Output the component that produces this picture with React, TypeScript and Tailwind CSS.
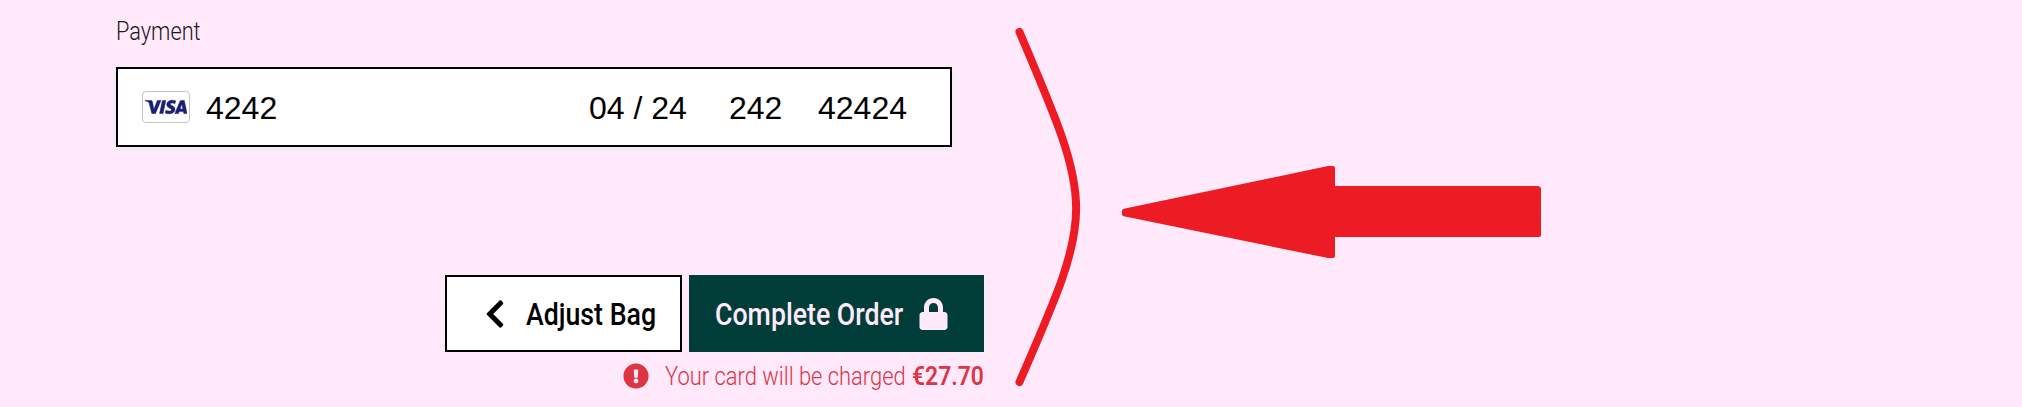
import { FaChevronLeft, FaExclamationCircle, FaLock } from "react-icons/fa";
import { SiVisa } from "react-icons/si";

function CardField() {
  return (
    <div className="mt-[20px] flex h-[80px] w-[836px] items-center border-2 border-black bg-white pl-[24px] font-['Liberation_Sans',Arial,sans-serif] text-[32px] leading-[36px] text-black shadow-[0_2px_6px_0_#e6ebf1]">
      <div className="flex h-[32px] w-[48px] items-center justify-center rounded-[4px] border border-[#c4c4c8] bg-white text-[#1a1f71]">
        <SiVisa className="h-[42px] w-[42px] shrink-0" stroke="currentColor" strokeWidth="0.3" />
      </div>
      <span className="ml-[16px] w-[383px] pt-[2px]">4242</span>
      <span className="w-[140px] pt-[2px]">04 / 24</span>
      <span className="w-[89px] pt-[2px]">242</span>
      <span className="pt-[2px]">42424</span>
    </div>
  );
}

function Annotation() {
  return (
    <svg
      className="pointer-events-none absolute top-0 left-0"
      width="2022"
      height="407"
      viewBox="0 0 2022 407"
      fill="none"
    >
      <path
        d="M1019.5 32C1095 209 1095 209 1019.5 382"
        stroke="#ed1c24"
        strokeWidth="8"
        strokeLinecap="round"
      />
      <path
        d="M1122 211Q1122 209 1125 208.5L1328 166H1333Q1335 166 1335 168V186H1537Q1541 186 1541 189V235Q1541 237 1539 237H1335V256Q1335 258 1333 258H1328L1125 216.5Q1122 216 1122 214Z"
        fill="#ed1c24"
      />
    </svg>
  );
}

export default function App() {
  return (
    <main className="relative h-[407px] w-[2022px] overflow-hidden bg-[#ffe9fb] pl-[116px] font-['Roboto',sans-serif]">
      <div className="pt-[15px]">
        <label className="block h-[32px] w-[90px] origin-left scale-x-[0.87] pt-px text-[25px] leading-[32px] font-light whitespace-nowrap text-[#1c1620]">
          Payment
        </label>
        <CardField />
      </div>

      <div className="mt-[128px] flex w-[868px] justify-end gap-[7px]">
        <button className="flex h-[77px] w-[237px] items-center border-2 border-black bg-white pl-[38px] text-black">
          <FaChevronLeft className="h-[32px] w-[20px]" />
          <span className="ml-[21px] block w-[130px] origin-left scale-x-[0.835] text-left text-[32px] leading-[40px] font-medium whitespace-nowrap">
            Adjust Bag
          </span>
        </button>
        <button className="flex h-[77px] w-[295px] items-center bg-[#003d39] pl-[26px] text-[#ffe9fb]">
          <span className="block w-[204px] origin-left scale-x-[0.835] text-left text-[32px] leading-[40px] font-medium whitespace-nowrap">
            Complete Order
          </span>
          <FaLock className="h-[32px] w-[29px]" />
        </button>
      </div>

      <div className="mt-[7px] flex h-[34px] w-[868px] items-center text-[25px] leading-[32px] text-[#dc3545]">
        <FaExclamationCircle className="ml-[507px] h-[26px] w-[26px] shrink-0" />
        <span className="ml-[16px] block w-[247px] shrink-0 origin-left scale-x-[0.877] pt-px font-light whitespace-nowrap">
          Your card will be charged
        </span>
        <strong className="block w-[72px] origin-left scale-x-[0.915] pt-px font-semibold whitespace-nowrap">
          €27.70
        </strong>
      </div>

      <Annotation />
    </main>
  );
}
